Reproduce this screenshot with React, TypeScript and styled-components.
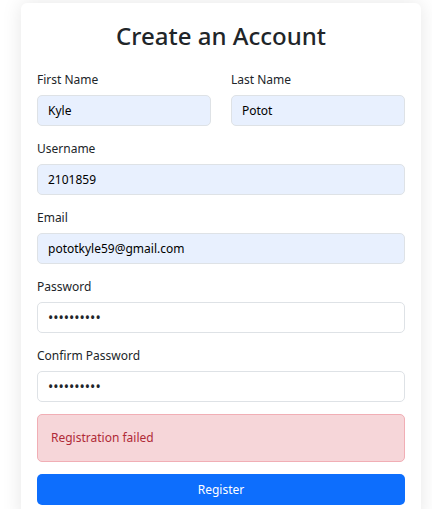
import React, { useState } from "react";
import styled, { createGlobalStyle } from "styled-components";

const GlobalStyle = createGlobalStyle`
  *, *::before, *::after { box-sizing: border-box; }
  html { overflow: hidden; }
  body {
    margin: 0;
    background: #ffffff;
    color: #212529;
    font-family: "Segoe UI", "Noto Sans", "Open Sans", sans-serif;
    font-size: 12px;
    line-height: 22px;
  }
`;

const Page = styled.main`
  padding: 3px 11px 0 21px;
`;

const Card = styled.section`
  padding: 16px;
  background: #ffffff;
  border-radius: 6px;
  box-shadow: 0 0 20px rgba(0, 0, 0, 0.1);
`;

const Title = styled.h1`
  margin: 0 0 16px;
  font-size: 24px;
  font-weight: 500;
  line-height: 34px;
  text-align: center;
`;

const Form = styled.form`
  display: flex;
  flex-direction: column;
  gap: 12px;
`;

const NameRow = styled.div`
  display: grid;
  grid-template-columns: 1fr 1fr;
  gap: 20px;
`;

const FieldGroup = styled.div`
  display: flex;
  flex-direction: column;
  gap: 4px;
`;

const Label = styled.label`
  line-height: 22px;
`;

const Input = styled.input<{ $filled?: boolean }>`
  width: 100%;
  height: 31px;
  padding: 0 10px;
  border: 1px solid #dee2e6;
  border-radius: 5px;
  background: ${(p) => (p.$filled ? "#e8f0fe" : "#ffffff")};
  color: ${(p) => (p.$filled ? "#000000" : "#212529")};
  font: inherit;
  font-size: ${(p) => (p.$filled ? "12px" : "14px")};
`;

const Alert = styled.div`
  padding: 12px 13px;
  border: 1px solid #f1aeb5;
  border-radius: 5px;
  background: #f6d6d9;
  color: #b02a37;
`;

const SubmitButton = styled.button`
  height: 31px;
  border: 0;
  border-radius: 5px;
  background: #0d6efd;
  color: #ffffff;
  font: inherit;
  cursor: pointer;
`;

type FieldProps = {
  id: string;
  label: string;
  initial: string;
  type?: string;
};

function Field({ id, label, initial, type = "text" }: FieldProps) {
  const [value, setValue] = useState(initial);
  return (
    <FieldGroup>
      <Label htmlFor={id}>{label}</Label>
      <Input
        id={id}
        type={type}
        value={value}
        $filled={type !== "password"}
        onChange={(e) => setValue(e.target.value)}
      />
    </FieldGroup>
  );
}

export default function App() {
  return (
    <>
      <GlobalStyle />
      <Page>
        <Card>
          <Title>Create an Account</Title>
          <Form onSubmit={(e) => e.preventDefault()}>
            <NameRow>
              <Field id="firstName" label="First Name" initial="Kyle" />
              <Field id="lastName" label="Last Name" initial="Potot" />
            </NameRow>
            <Field id="username" label="Username" initial="2101859" />
            <Field id="email" label="Email" type="email" initial="pototkyle59@gmail.com" />
            <Field id="password" label="Password" type="password" initial="abcdefghij" />
            <Field id="confirm" label="Confirm Password" type="password" initial="abcdefghij" />
            <Alert role="alert">Registration failed</Alert>
            <SubmitButton type="submit">Register</SubmitButton>
          </Form>
        </Card>
      </Page>
    </>
  );
}
